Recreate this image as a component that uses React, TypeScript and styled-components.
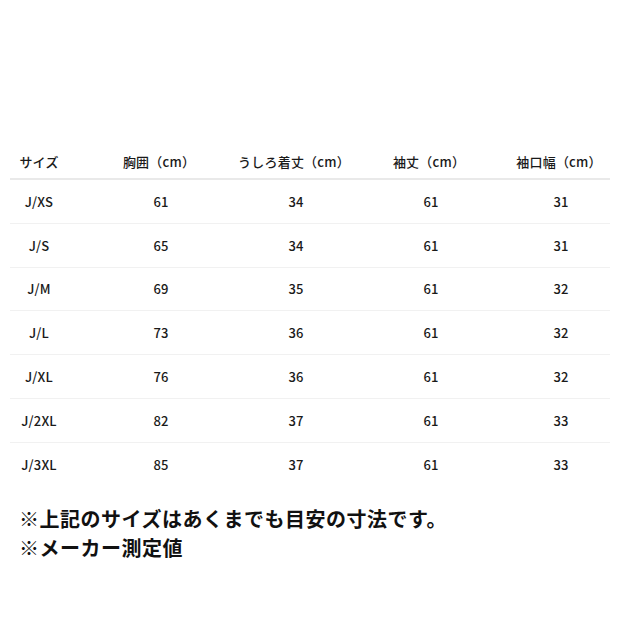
import React from "react";
import styled, { createGlobalStyle } from "styled-components";

const Global = createGlobalStyle`
  html, body { margin: 0; padding: 0; background: #fff; }
  body { font-family: "Noto Sans CJK JP", "Noto Sans", sans-serif; color: #1a1a1a; }
`;

const Page = styled.div`
  width: 620px;
  height: 620px;
  padding-top: 145px;
  box-sizing: border-box;
`;

const Table = styled.div`
  margin-left: 10px;
  width: 600px;
  display: flex;
  flex-direction: column;
`;

const Row = styled.div<{ $head?: boolean; $last?: boolean }>`
  display: grid;
  grid-template-columns: 58px 186px 84px 186px 74px;
  height: ${(p) => (p.$head ? "33px" : "42.8px")};
  border-bottom: ${(p) =>
    p.$head ? "2px solid #e9e9e9" : p.$last ? "1px solid transparent" : "1px solid #f1f1f1"};
  align-items: center;
  font-size: 13px;
  font-weight: 500;
  letter-spacing: 0.2px;
`;

const Cell = styled.div<{ $shift?: number }>`
  display: flex;
  justify-content: center;
  white-space: nowrap;
  padding-right: ${(p) => p.$shift ?? 0}px;
`;

const Notes = styled.div`
  margin-top: 17px;
  padding-left: 19px;
  font-size: 20px;
  font-weight: 700;
  line-height: 29px;
  letter-spacing: 0.5px;
  color: #111;
`;

const headers = ["サイズ", "胸囲（cm）", "うしろ着丈（cm）", "袖丈（cm）", "袖口幅（cm）"];
const rows = [
  ["J/XS", "61", "34", "61", "31"],
  ["J/S", "65", "34", "61", "31"],
  ["J/M", "69", "35", "61", "32"],
  ["J/L", "73", "36", "61", "32"],
  ["J/XL", "76", "36", "61", "32"],
  ["J/2XL", "82", "37", "61", "33"],
  ["J/3XL", "85", "37", "61", "33"],
];

export default function App() {
  return (
    <Page>
      <Global />
      <Table>
        <Row $head>
          {headers.map((h, i) => (
            <Cell key={h} $shift={i === 0 ? 0 : 4}>
              {h}
            </Cell>
          ))}
        </Row>
        {rows.map((r, ri) => (
          <Row key={r[0]} $last={ri === rows.length - 1}>
            {r.map((v, i) => (
              <Cell key={i}>{v}</Cell>
            ))}
          </Row>
        ))}
      </Table>
      <Notes>
        <div>※上記のサイズはあくまでも目安の寸法です。</div>
        <div>※メーカー測定値</div>
      </Notes>
    </Page>
  );
}
